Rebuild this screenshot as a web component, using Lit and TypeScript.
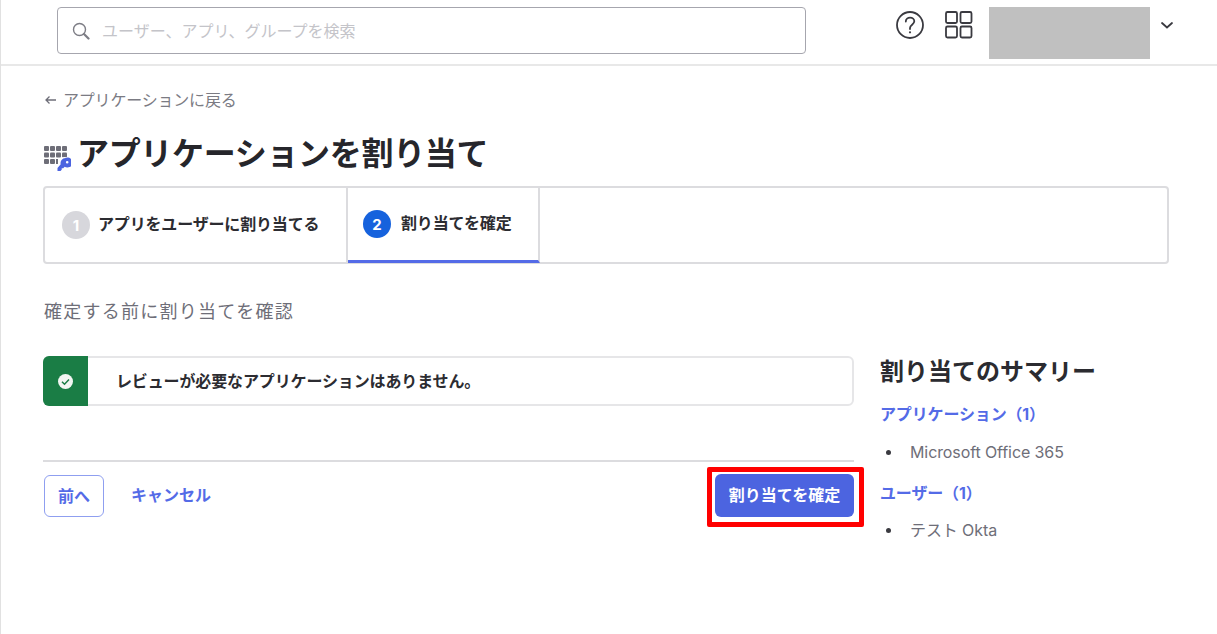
import { LitElement, html, css } from "lit";
import { customElement } from "lit/decorators.js";

@customElement("app-root")
export class AppRoot extends LitElement {
  static styles = css`
    :host { display: block; height: 634px; box-sizing: border-box; overflow: hidden; background: #fff; border-left: 1px solid #e1e1e1; font-family: "Inter", "Noto Sans CJK JP", sans-serif; color: #1d1d21; }
    * { box-sizing: border-box; }
    .top { height: 66px; border-bottom: 2px solid #e8e8e8; display: flex; padding: 7px 0 0 56px; }
    .search { width: 749px; height: 47px; border: 1px solid #a6a6ae; border-radius: 4px; display: flex; align-items: center; padding: 0 0 2px 14px; gap: 12px; font-size: 16px; color: #c4c4c9; }
    .search svg { width: 18px; height: 18px; flex: none; margin-top: 2px; }
    .tools { display: flex; margin-left: 89px; }
    .help { width: 30px; height: 30px; margin-top: 3px; }
    .grid { width: 30px; height: 30px; margin: 3px 0 0 19px; }
    .avatar { width: 161px; height: 52px; background: #c0c0c0; margin-left: 15px; }
    .chev { width: 14px; height: 9px; margin: 14px 0 0 10px; }
    .page { padding: 24px 48px 0 42px; }
    .back { font-size: 16px; line-height: 20px; color: #7b7b83; display: flex; align-items: center; gap: 5px; letter-spacing: -0.2px; margin-left: 1px; }
    .back svg { width: 14px; height: 10px; }
    .title { display: flex; align-items: center; margin-top: 21px; gap: 6px; height: 46px; }
    .title svg { width: 27px; height: 28px; margin: 8px 0 0 1px; }
    h1 { margin: 0; font-size: 32px; line-height: 46px; font-weight: 700; color: #26262b; letter-spacing: -0.32px; }
    .steps { margin-top: 9px; height: 78px; border: 2px solid #dcdcdf; border-radius: 4px; display: flex; }
    .step { display: flex; align-items: center; gap: 8px; padding: 0 0 0 17px; font-size: 16px; font-weight: 700; color: #2c2c31; height: 100%; letter-spacing: -0.17px; }
    .step > span:last-child { margin-top: -4px; }
    .s1 { width: 303px; border-right: 2px solid #dcdcdf; }
    .s2 { width: 192px; border-right: 2px solid #dcdcdf; padding-left: 15px; gap: 10px; border-bottom: 3px solid #546be7; margin-bottom: -1px; height: calc(100% + 1px); }
    .num { width: 28px; height: 28px; border-radius: 50%; display: flex; align-items: center; justify-content: center; font-size: 15px; font-weight: 700; background: #d7d7dc; color: #fff; }
    .s2 .num { background: #1662dd; }
    .intro { font-size: 18px; line-height: 26px; color: #6e6e78; margin: 35px 0 0 1px; letter-spacing: 1.25px; }
    .cols { display: flex; margin-top: 31px; }
    .left { width: 811px; flex: none; }
    .banner { height: 50px; border: 2px solid #e6e6e8; border-radius: 6px; display: flex; align-items: center; }
    .stripe { width: 45px; height: 50px; margin-left: -2px; background: #1a7d45; border-radius: 6px 0 0 6px; display: flex; align-items: center; justify-content: center; flex: none; }
    .stripe svg { width: 15px; height: 15px; }
    .banner span { margin: -2px 0 0 28px; font-size: 16px; font-weight: 700; color: #2c2c31; letter-spacing: -0.13px; }
    .actions { margin-top: 54px; border-top: 2px solid #dcdcdf; padding-top: 13px; display: flex; align-items: flex-start; }
    .prev { width: 60px; height: 42px; border: 1.5px solid #8f9ff0; border-radius: 6px; color: #546be7; font-size: 16px; font-weight: 700; display: flex; align-items: center; justify-content: center; background: #fff; margin-left: 1px; padding-bottom: 3px; }
    .cancel { margin: 9px 0 0 27px; font-size: 16px; font-weight: 700; color: #546be7; line-height: 22px; }
    .confirm-wrap { margin-left: auto; position: relative; margin-top: -1px; }
    .confirm { width: 139px; height: 43px; border-radius: 6px; background: #4c64e0; color: #fff; font-size: 16px; font-weight: 700; display: flex; align-items: center; justify-content: center; padding-bottom: 3px; }
    .frame { position: absolute; left: -8px; right: -10px; top: -7px; bottom: -10px; border: 5px solid #ff0000; border-radius: 2px; }
    .side { margin-left: 26px; padding-top: 1px; }
    h2 { margin: 0; font-size: 24px; line-height: 30px; font-weight: 700; color: #2b2b30; white-space: nowrap; }
    h3 { margin: 0; font-size: 16px; line-height: 22px; font-weight: 700; color: #546be7; letter-spacing: -0.15px; }
    .h-a { margin-top: 16px; }
    .h-u { margin-top: 19px; }
    ul { margin: 0; padding: 0; list-style: none; }
    li { display: flex; align-items: center; font-size: 16px; line-height: 22px; color: #6e6e78; margin-top: 16px; padding-left: 6px; gap: 19px; letter-spacing: -0.1px; }
    .u2 li { margin-top: 15px; }
    li i { width: 5px; height: 5px; border-radius: 50%; background: #3a3a40; flex: none; }
  `;

  render() {
    return html`
      <div class="top">
        <div class="search">
          <svg viewBox="0 0 18 18" fill="none" stroke="#7d7d85" stroke-width="1.4"><circle cx="7.5" cy="7.5" r="6"/><path d="M12 12l4.5 4.5" stroke-width="2.2" stroke-linecap="round"/></svg>
          <span>ユーザー、アプリ、グループを検索</span>
        </div>
        <div class="tools">
          <svg class="help" viewBox="0 0 30 30" fill="none" stroke="#3a3a40" stroke-width="1.8"><circle cx="15" cy="15" r="13"/><path d="M10.8 11.6c0-2.5 2-4 4.3-4s4.2 1.500 4.200 3.700c0 3.300-4.300 3.500-4.300 6.700v1" stroke-linecap="round"/><circle cx="15" cy="22.300" r="1.100" fill="#3a3a40" stroke="none"/></svg>
          <svg class="grid" viewBox="0 0 30 30" fill="none" stroke="#3a3a40" stroke-width="1.8"><rect x="2" y="2" width="11" height="11" rx="1.500"/><rect x="16.500" y="2" width="11" height="11" rx="1.500"/><rect x="2" y="16.500" width="11" height="11" rx="1.500"/><rect x="16.500" y="16.500" width="11" height="11" rx="1.500"/></svg>
          <div class="avatar"></div>
          <svg class="chev" viewBox="0 0 14 9" fill="none" stroke="#3a3a40" stroke-width="1.800"><path d="M2 2l5 4.500L12 2" stroke-linecap="round"/></svg>
        </div>
      </div>
      <div class="page">
        <div class="back">
          <svg viewBox="0 0 14 10" fill="none" stroke="#6e6e78" stroke-width="1.300"><path d="M12 5H2M5.500 1.500L2 5l3.500 3.500"/></svg>
          <span>アプリケーションに戻る</span>
        </div>
        <div class="title">
          <svg viewBox="0 0 27 28">
            <g fill="#6e6e78">
              <rect x="0" y="2" width="5" height="5" rx="1"/><rect x="6" y="2" width="5" height="5" rx="1"/><rect x="12" y="2" width="5" height="5" rx="1"/><rect x="18" y="2" width="5" height="5" rx="1"/>
              <rect x="0" y="8.500" width="5" height="5" rx="1"/><rect x="6" y="8.500" width="5" height="5" rx="1"/><rect x="12" y="8.500" width="5" height="5" rx="1"/><rect x="18" y="8.500" width="5" height="5" rx="1"/>
              <rect x="0" y="15" width="5" height="5" rx="1"/><rect x="6" y="15" width="5" height="5" rx="1"/><rect x="12" y="15" width="2" height="5"/>
            </g>
            <circle cx="20.500" cy="19" r="6" fill="#fff"/>
            <path d="M21.500 14a5 5 0 0 0-4.800 6.300L13.500 24v3h3l1.200-1.300v-1.500h1.500l1.500-1.500a5 5 0 1 0 .8-8.700zm1.700 3a1.300 1.300 0 1 1 0 2.600 1.300 1.300 0 0 1 0-2.600z" fill="#4c64e0" fill-rule="evenodd"/>
          </svg>
          <h1>アプリケーションを割り当て</h1>
        </div>
        <div class="steps">
          <div class="step s1"><span class="num">1</span><span>アプリをユーザーに割り当てる</span></div>
          <div class="step s2"><span class="num">2</span><span>割り当てを確定</span></div>
        </div>
        <div class="intro">確定する前に割り当てを確認</div>
        <div class="cols">
          <div class="left">
            <div class="banner">
              <div class="stripe">
                <svg viewBox="0 0 15 15"><circle cx="7.500" cy="7.500" r="7.500" fill="#f2f6f2"/><path d="M4 7.800l2.500 2.400L11 5.500" fill="none" stroke="#1a7d45" stroke-width="1.500"/></svg>
              </div>
              <span>レビューが必要なアプリケーションはありません。</span>
            </div>
            <div class="actions">
              <div class="prev">前へ</div>
              <div class="cancel">キャンセル</div>
              <div class="confirm-wrap">
                <div class="confirm">割り当てを確定</div>
                <div class="frame"></div>
              </div>
            </div>
          </div>
          <div class="side">
            <h2>割り当てのサマリー</h2>
            <h3 class="h-a">アプリケーション（1）</h3>
            <ul><li><i></i><span>Microsoft Office 365</span></li></ul>
            <h3 class="h-u">ユーザー（1）</h3>
            <ul class="u2"><li><i></i><span>テスト Okta</span></li></ul>
          </div>
        </div>
      </div>
    `;
  }
}
